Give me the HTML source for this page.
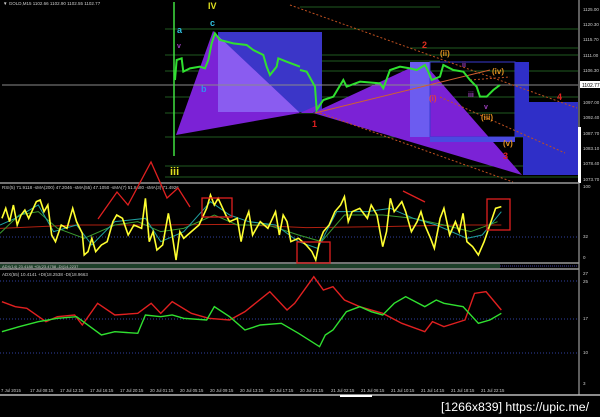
<!DOCTYPE html>
<html><head><meta charset="utf-8"><style>
html,body{margin:0;padding:0;background:#000;width:600px;height:417px;overflow:hidden}
svg{display:block}
text{font-family:"Liberation Sans",sans-serif}
</style></head><body>
<svg width="600" height="417" viewBox="0 0 600 417" xmlns="http://www.w3.org/2000/svg">
<defs>
<clipPath id="c1"><rect x="218" y="32" width="104" height="80"/></clipPath>
<clipPath id="c2"><rect x="410" y="62" width="20" height="75"/></clipPath>
</defs>
<rect width="600" height="417" fill="#000"/>
<g stroke="#1f5a1f" stroke-width="1">
<line x1="300" y1="7" x2="440" y2="7"/>
<line x1="165" y1="29" x2="578" y2="29"/>
<line x1="410" y1="48" x2="578" y2="48"/>
<line x1="165" y1="55" x2="578" y2="55"/>
<line x1="300" y1="61" x2="440" y2="61"/>
<line x1="165" y1="71" x2="578" y2="71"/>
<line x1="165" y1="97" x2="578" y2="97"/>
<line x1="165" y1="113" x2="578" y2="113"/>
<line x1="165" y1="137" x2="578" y2="137"/>
<line x1="165" y1="166" x2="578" y2="166"/>
<line x1="165" y1="177" x2="578" y2="177"/>
</g>
<!-- shapes -->
<rect x="218" y="32" width="104" height="80" fill="#3b36c8"/>
<polygon points="176,135 213,31 300,113" fill="#7b22d6"/>
<polygon points="176,135 213,31 300,113" fill="#8a5cf0" clip-path="url(#c1)"/>
<polygon points="176,135 213,31 322,105 322,112" fill="#8a5cf0" clip-path="url(#c1)" opacity="0"/>
<polygon points="313,113 300,113 322,103" fill="#7b22d6"/>
<polygon points="313,113 423,62 522,175" fill="#7b22d6"/>
<rect x="410" y="62" width="20" height="75" fill="#6c5cf0"/>
<rect x="430" y="62" width="85" height="75" fill="none" stroke="#3a3ad0" stroke-width="1"/>
<rect x="430" y="137" width="85" height="5" fill="#4a4ae0"/>
<rect x="515" y="62" width="14" height="75" fill="#2f2fc8"/>
<rect x="529" y="102" width="49" height="73" fill="#2f2fc8"/>
<rect x="523" y="137" width="7" height="38" fill="#2f2fc8"/>
<line x1="2" y1="85" x2="578" y2="85" stroke="#8a8a8a" stroke-width="1"/>
<g stroke="#c05020" stroke-width="1" stroke-dasharray="2,2" fill="none">
<line x1="290" y1="5" x2="577" y2="108"/>
<line x1="320" y1="113" x2="513" y2="182"/>
<line x1="440" y1="97" x2="565" y2="153"/>
<line x1="470" y1="80" x2="510" y2="77"/>
</g>
<line x1="315" y1="113" x2="490" y2="70" stroke="#d06030" stroke-width="1"/>
<line x1="174" y1="2" x2="174" y2="156" stroke="#40e040" stroke-width="1.5"/>
<g transform="scale(0.3333)" fill="none" stroke="#30e030" stroke-width="6">
<polyline points="525,240 530,180 545,175 550,215 570,205 600,200 615,205 625,180 635,130 645,100 660,120 700,130 740,135 760,150 790,165 800,200 810,225 830,200 835,175 860,185 900,200"/>
</g>
<g transform="translate(300,0) scale(0.3333)" fill="none" stroke="#30e030" stroke-width="6">
<polyline points="0,210 20,215 45,260 50,330 70,300 100,290 130,240 140,260 180,245 240,250 250,265 270,210 300,200 330,205 350,210 375,195 385,215 395,240 420,230 430,195 460,210 490,215 510,240 530,260 540,290 560,290 580,270 600,255"/>
</g>
<g font-weight="bold" font-size="9">
<text x="208" y="9" fill="#e0e020">IV</text>
<text x="210" y="26" fill="#30c0e0">c</text>
<text x="177" y="33" fill="#30c0e0">a</text>
<text x="201" y="92" fill="#3090f0">b</text>
<text x="170" y="175" fill="#e0e020" font-size="11">iii</text>
<text x="312" y="127" fill="#e02020">1</text>
<text x="422" y="48" fill="#e03020">2</text>
<text x="440" y="56" fill="#e09020" font-size="8">(ii)</text>
<text x="492" y="74" fill="#e09020" font-size="8">(iv)</text>
<text x="429" y="101" fill="#e04040" font-size="8">(i)</text>
<text x="481" y="120" fill="#e09020" font-size="8">(iii)</text>
<text x="503" y="146" fill="#e09020" font-size="8">(v)</text>
<text x="503" y="159" fill="#e02020">3</text>
<text x="557" y="100" fill="#e02020">4</text>
<text x="484" y="109" fill="#a040c0" font-size="7">v</text>
<text x="462" y="67" fill="#a040c0" font-size="7">ii</text>
<text x="468" y="97" fill="#a040c0" font-size="7">iii</text>
<text x="177" y="48" fill="#a040c0" font-size="7">v</text>
</g>
<text x="3" y="5" fill="#ccc" font-size="4.5">▼ GOLD,M15  1102.66 1102.90 1102.55 1102.77</text>
<line x1="579" y1="0" x2="579" y2="395" stroke="#bbb" stroke-width="1"/>
<rect x="578" y="127" width="3" height="56" fill="#fff"/>
<g fill="#ccc" font-size="4.5">
<text x="583" y="11">1125.00</text><text x="583" y="26">1120.30</text><text x="583" y="41">1115.70</text>
<text x="583" y="57">1111.00</text><text x="583" y="72">1106.30</text><text x="583" y="104">1097.00</text>
<text x="583" y="119">1092.40</text><text x="583" y="135">1087.70</text><text x="583" y="150">1083.10</text>
<text x="583" y="165">1078.40</text><text x="583" y="181">1073.70</text>
<text x="583" y="188">100</text><text x="583" y="238">32</text><text x="583" y="259">0</text>
<text x="583" y="275">27</text><text x="583" y="283">25</text><text x="583" y="320">17</text><text x="583" y="354">10</text><text x="583" y="385">3</text>
</g>
<rect x="580" y="81" width="20" height="7" fill="#fff"/>
<text x="582" y="87" fill="#000" font-size="5">1102.77</text>
<line x1="0" y1="183" x2="579" y2="183" stroke="#999" stroke-width="1.5"/>
<line x1="0" y1="263" x2="579" y2="263" stroke="#999" stroke-width="1.5"/>
<line x1="0" y1="269" x2="579" y2="269" stroke="#999" stroke-width="1.5"/>
<line x1="0" y1="395" x2="600" y2="395" stroke="#bbb" stroke-width="1.5"/>
<rect x="0" y="264" width="500" height="4" fill="#2a5a3a" opacity="0.7"/>
<line x1="500" y1="266" x2="578" y2="266" stroke="#4040a0" stroke-dasharray="1,1"/>
<text x="2" y="189" fill="#ccc" font-size="4.5">RSI(5) 71.9118  -sMA(200) 47.2046  -sMA(55) 47.1050  -sMA(7) 51.8480  -sMA(3) 71.4926</text>
<line x1="0" y1="237" x2="578" y2="237" stroke="#3040a0" stroke-dasharray="1,2"/>
<g transform="translate(0,175) scale(0.3827,0.3333)" fill="none">
<polyline vector-effect="non-scaling-stroke" stroke="#b02010" stroke-width="1" points="0,160 200,150 400,150 600,148 800,158 1000,155 1200,150 1310,150"/>
<polyline vector-effect="non-scaling-stroke" stroke="#3a9a30" stroke-width="1" points="0,175 50,120 100,110 150,160 220,190 300,150 360,140 420,170 480,160 560,120 620,150 700,150 780,180 840,200 900,120 1000,120 1080,130 1160,150 1230,170 1300,140"/>
<polyline vector-effect="non-scaling-stroke" stroke="#20a0a0" stroke-width="1" points="0,150 40,130 100,90 140,170 200,150 240,210 300,140 380,130 420,200 480,170 550,80 600,120 650,140 720,150 780,200 830,220 880,110 960,110 1020,100 1080,130 1140,150 1220,190 1260,180 1310,110"/>
<polyline vector-effect="non-scaling-stroke" stroke="#ffff30" stroke-width="1.6" points="5,130 15,100 25,140 35,90 45,150 55,120 65,105 75,130 95,80 105,75 115,110 125,90 135,180 145,200 160,150 175,160 190,100 200,140 215,175 220,240 230,230 240,190 250,230 265,210 280,200 295,140 305,120 320,130 335,180 350,150 370,160 380,70 390,200 400,170 410,225 425,210 440,115 450,180 460,255 470,170 480,190 500,170 520,150 540,100 550,60 560,90 570,70 590,120 600,140 620,130 630,200 640,140 650,110 660,180 680,140 700,160 720,110 730,180 740,120 750,140 760,200 780,190 800,210 815,230 825,255 835,200 845,170 860,150 875,110 890,90 900,65 910,140 920,110 940,100 960,130 970,90 985,120 1000,215 1010,170 1020,70 1030,110 1050,80 1060,110 1075,170 1090,140 1100,110 1110,150 1125,190 1135,220 1150,130 1160,100 1175,180 1190,140 1200,170 1210,115 1220,200 1235,215 1250,240 1265,200 1280,150 1295,100 1310,95"/>
</g>
<g fill="none" stroke="#e02020" stroke-width="1.3">
<rect x="202" y="198" width="30" height="19"/>
<rect x="297" y="242" width="33" height="21"/>
<rect x="487" y="199" width="23" height="31"/>
<polyline points="98,219 117,192 128,205 151,162 167,198 178,188 190,207"/>
<line x1="403" y1="191" x2="425" y2="202"/>
</g>
<text x="2" y="268" fill="#ccc" font-size="4">ADX(14) 23.4188 +DI(23.4758 -DI(14.2237</text>
<text x="2" y="276" fill="#ccc" font-size="4.5">ADX(55) 10.4141 +DI(18.2538 -DI(18.9663</text>
<g stroke="#3040a0" stroke-dasharray="1,2">
<line x1="0" y1="281" x2="578" y2="281"/><line x1="0" y1="319" x2="578" y2="319"/><line x1="0" y1="353" x2="578" y2="353"/>
</g>
<g transform="translate(0,250) scale(0.3827,0.3333)" fill="none">
<polyline vector-effect="non-scaling-stroke" stroke="#e02020" stroke-width="1.4" points="5,155 40,170 70,175 120,215 150,200 195,195 215,225 255,160 300,195 360,190 395,160 420,190 450,155 500,190 545,205 600,210 640,185 705,125 750,180 770,160 820,80 845,120 870,110 900,150 940,170 1000,190 1050,220 1110,245 1130,215 1160,230 1215,210 1240,130 1270,125 1310,180"/>
<polyline vector-effect="non-scaling-stroke" stroke="#30e030" stroke-width="1.4" points="5,245 50,230 100,215 150,205 200,200 265,255 300,245 360,250 380,195 420,200 450,195 480,205 540,210 560,170 600,200 640,240 680,225 735,220 780,250 835,290 850,255 870,240 905,185 940,170 970,185 1000,195 1030,160 1060,140 1110,170 1140,150 1160,160 1210,170 1250,220 1280,210 1310,190"/>
</g>
<g fill="#ccc" font-size="4.3">
<text x="1" y="392">7 Jul 2015</text><text x="30" y="392">17 Jul 08:15</text><text x="60" y="392">17 Jul 12:15</text>
<text x="90" y="392">17 Jul 16:15</text><text x="120" y="392">17 Jul 20:15</text><text x="150" y="392">20 Jul 01:15</text>
<text x="180" y="392">20 Jul 05:15</text><text x="210" y="392">20 Jul 09:15</text><text x="240" y="392">20 Jul 13:15</text>
<text x="270" y="392">20 Jul 17:15</text><text x="300" y="392">20 Jul 21:15</text><text x="331" y="392">21 Jul 02:15</text>
<text x="361" y="392">21 Jul 06:15</text><text x="391" y="392">21 Jul 10:15</text><text x="421" y="392">21 Jul 14:15</text>
<text x="451" y="392">21 Jul 18:15</text><text x="481" y="392">21 Jul 22:15</text>
</g>
<rect x="340" y="395" width="32" height="2" fill="#fff"/>
<text x="441" y="411" fill="#fff" font-size="11.5" textLength="148" lengthAdjust="spacingAndGlyphs">[1266x839] https://upic.me/</text>
</svg>
</body></html>
